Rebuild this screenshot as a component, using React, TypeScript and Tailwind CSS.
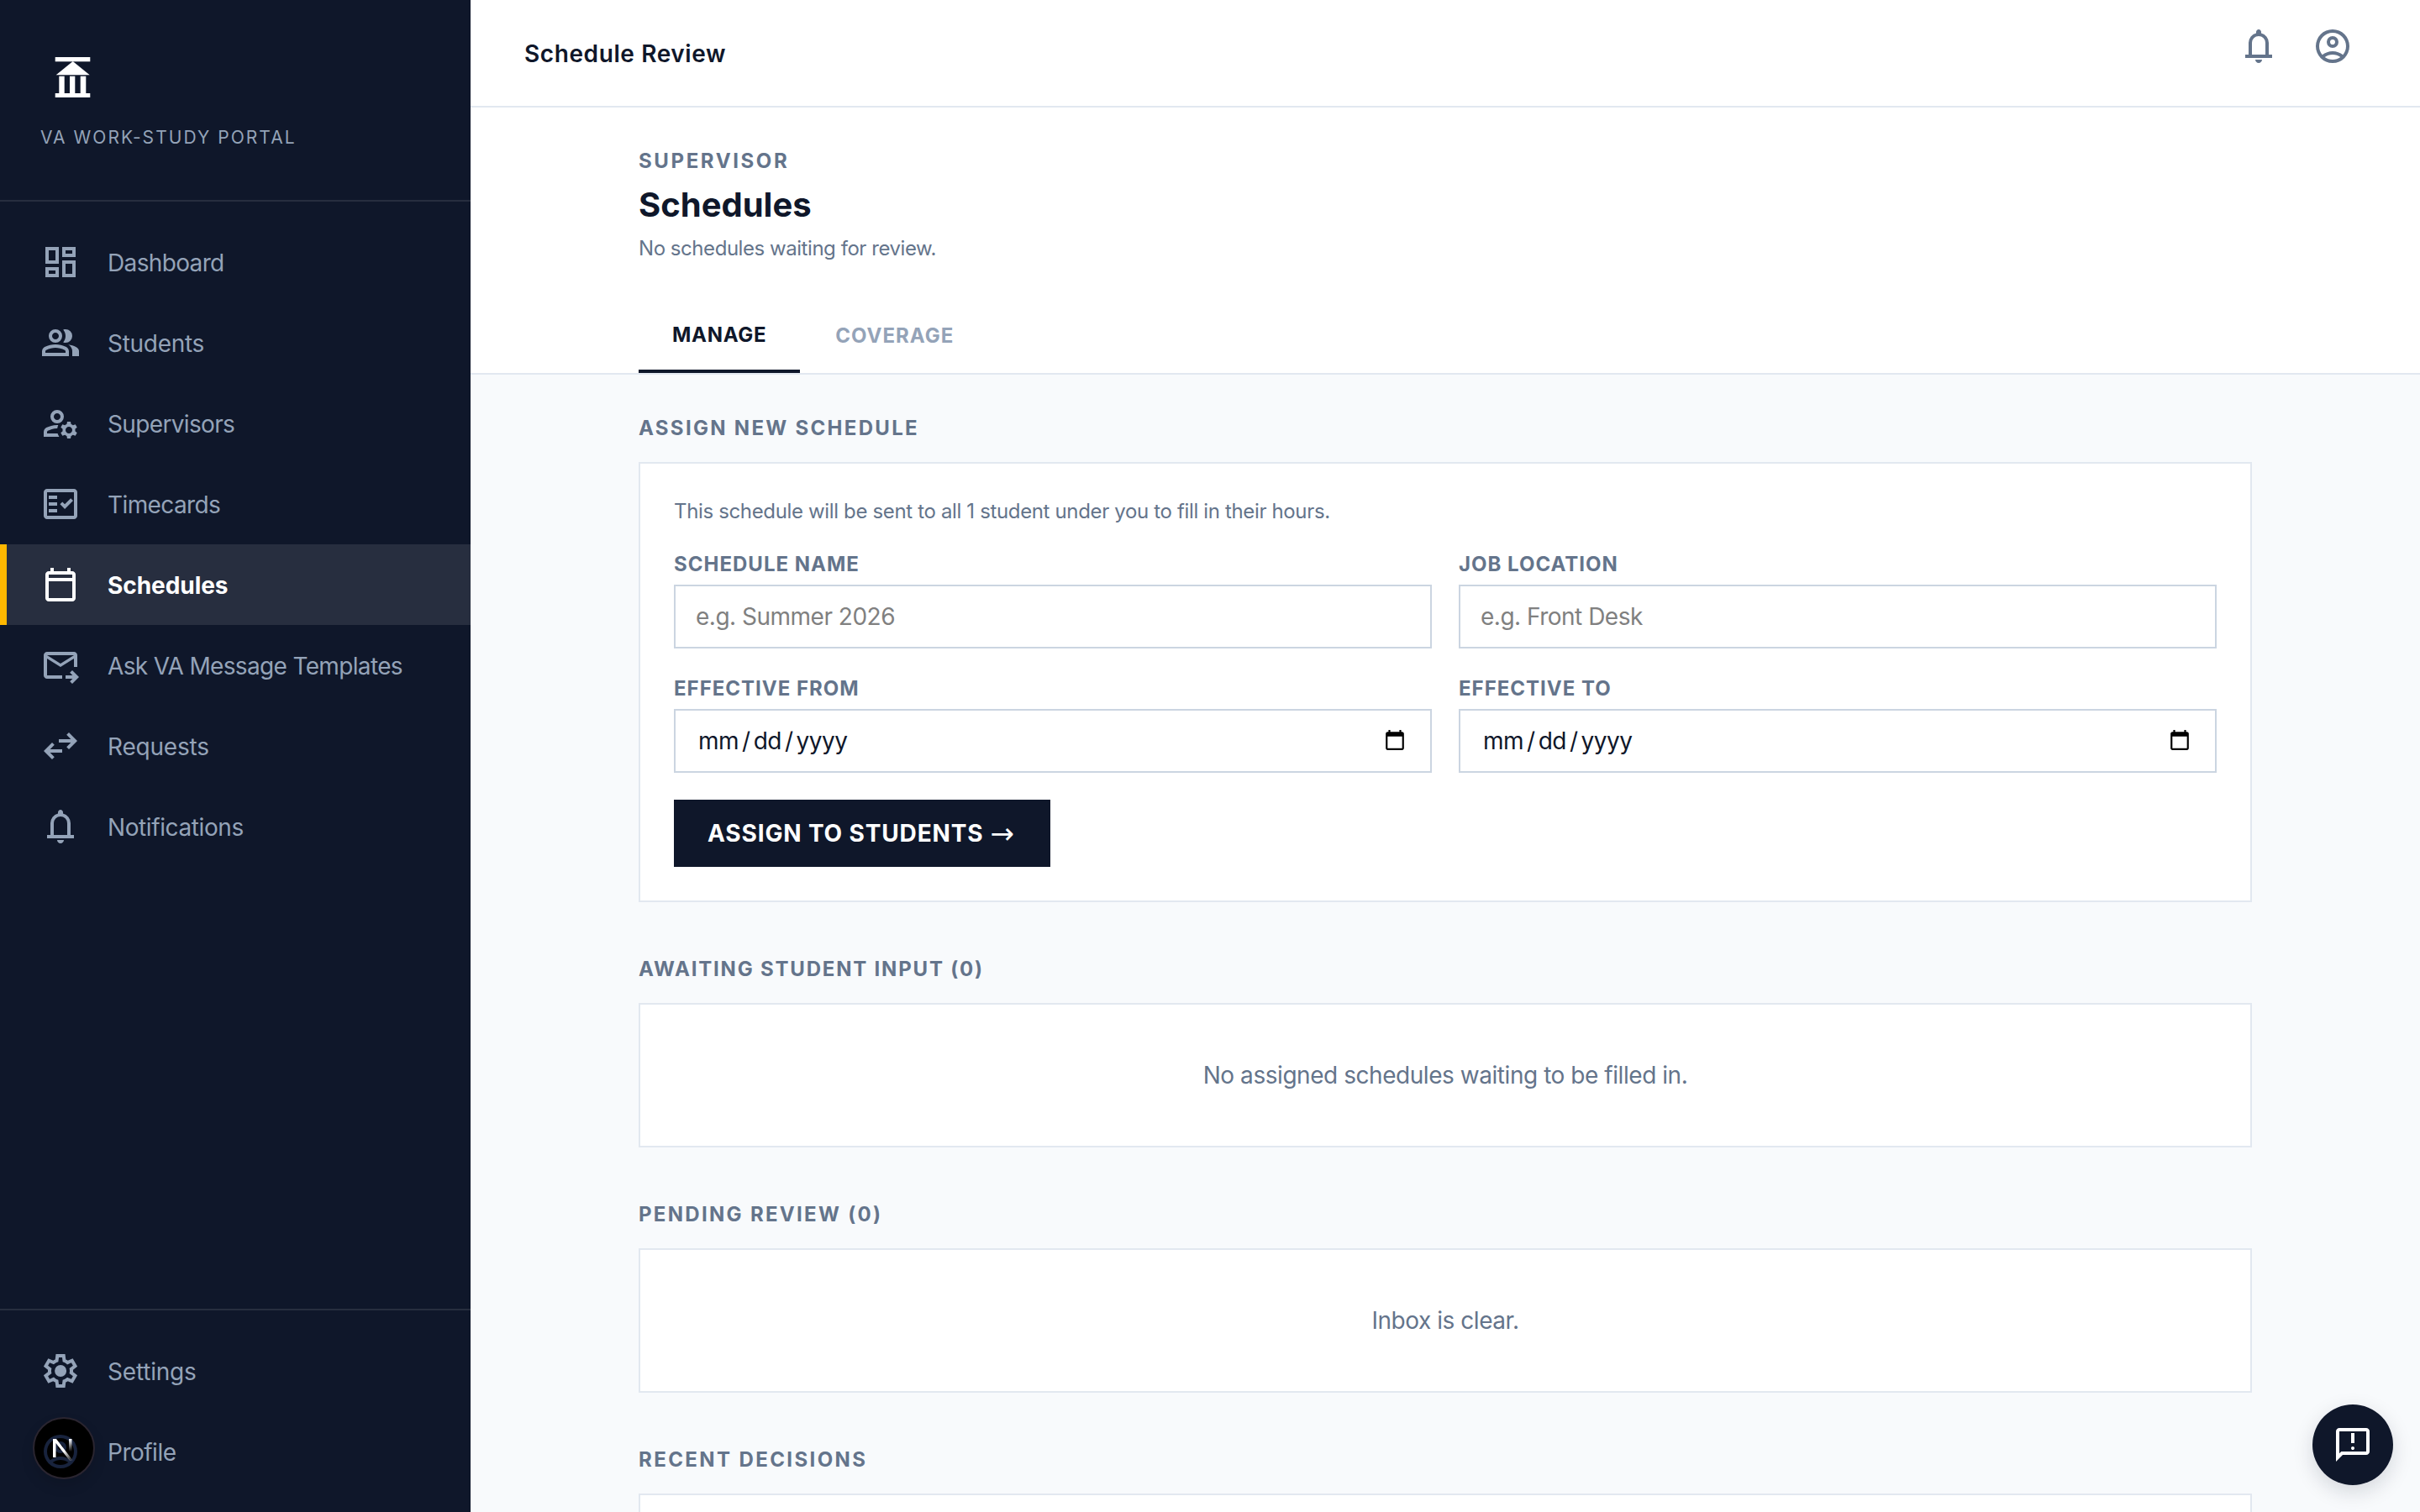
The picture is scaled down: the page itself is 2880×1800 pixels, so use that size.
import React from "react";

const P = {
  dashboard: "M520-600v-240h320v240H520ZM120-440v-400h320v400H120Zm400 320v-400h320v400H520Zm-400 0v-240h320v240H120Zm80-400h160v-240H200v240Zm400 320h160v-240H600v240Zm0-480h160v-80H600v80ZM200-200h160v-80H200v80Zm160-320Zm240-160Zm0 240ZM360-280Z",
  group: "M40-160v-112q0-34 17.5-62.5T104-378q62-31 126-46.5T360-440q66 0 130 15.5T616-378q29 15 46.5 43.5T680-272v112H40Zm720 0v-120q0-44-24.5-84.5T666-434q51 6 96 20.5t84 35.5q36 20 55 44.5t19 53.5v120H760ZM360-480q-66 0-113-47t-47-113q0-66 47-113t113-47q66 0 113 47t47 113q0 66-47 113t-113 47Zm400-160q0 66-47 113t-113 47q-11 0-28-2.5t-28-5.5q27-32 41.5-71t14.5-81q0-42-14.5-81T544-792q14-5 28-6.5t28-1.5q66 0 113 47t47 113ZM120-240h480v-32q0-11-5.5-20T580-306q-54-27-109-40.5T360-360q-56 0-111 13.5T140-306q-9 5-14.5 14t-5.5 20v32Zm240-320q33 0 56.5-23.5T440-640q0-33-23.5-56.5T360-720q-33 0-56.5 23.5T280-640q0 33 23.5 56.5T360-560Zm0 320Zm0-400Z",
  manage: "M400-480q-66 0-113-47t-47-113q0-66 47-113t113-47q66 0 113 47t47 113q0 66-47 113t-113 47ZM80-160v-112q0-33 17-62t47-44q51-26 115-44t141-18h14q6 0 12 2-8 18-13.5 37.5T404-360h-4q-71 0-127.5 18T180-306q-9 5-14.5 14t-5.5 20v32h252q6 21 16 41.5t22 38.5H80Zm560 40-12-60q-12-5-22.5-10.5T584-204l-58 18-40-68 46-40q-2-14-2-26t2-26l-46-40 40-68 58 18q11-8 21.5-13.5T628-460l12-60h80l12 60q12 5 22.5 11t21.5 15l58-20 40 70-46 40q2 12 2 25t-2 25l46 40-40 68-58-18q-11 8-21.5 13.5T732-180l-12 60h-80Zm40-120q33 0 56.5-23.5T760-320q0-33-23.5-56.5T680-400q-33 0-56.5 23.5T600-320q0 33 23.5 56.5T680-240ZM400-560q33 0 56.5-23.5T480-640q0-33-23.5-56.5T400-720q-33 0-56.5 23.5T320-640q0 33 23.5 56.5T400-560Zm0-80Zm12 400Z",
  fact: "M160-120q-33 0-56.5-23.5T80-200v-560q0-33 23.5-56.5T160-840h640q33 0 56.5 23.5T880-760v560q0 33-23.5 56.5T800-120H160Zm0-80h640v-560H160v560Zm40-80h200v-80H200v80Zm382-80 198-198-57-57-141 142-57-57-56 57 113 113Zm-382-80h200v-80H200v80Zm0-160h200v-80H200v80Zm-40 400v-560 560Z",
  calendar: "M200-80q-33 0-56.5-23.5T120-160v-560q0-33 23.5-56.5T200-800h40v-80h80v80h320v-80h80v80h40q33 0 56.5 23.5T840-720v560q0 33-23.5 56.5T760-80H200Zm0-80h560v-400H200v400Zm0-480h560v-80H200v80Zm0 0v-80 80Z",
  inbox: "M480-440 160-640v400h360v80H160q-33 0-56.5-23.5T80-240v-480q0-33 23.5-56.5T160-800h640q33 0 56.5 23.5T880-720v280h-80v-200L480-440Zm0-80 320-200H160l320 200ZM760-40l-56-56 63-64H600v-80h167l-64-64 57-56 160 160L760-40ZM160-640v440-240 3-283 80Z",
  sync: "M280-160 80-360l200-200 56 57-103 103h287v80H233l103 103-56 57Zm400-240-56-57 103-103H440v-80h287L624-743l56-57 200 200-200 200Z",
  bell: "M160-200v-80h80v-280q0-83 50-147.5T420-792v-28q0-25 17.5-42.5T480-880q25 0 42.5 17.5T540-820v28q80 20 130 84.5T720-560v280h80v80H160Zm320-300Zm0 420q-33 0-56.5-23.5T400-160h160q0 33-23.5 56.5T480-80ZM320-280h320v-280q0-66-47-113t-113-47q-66 0-113 47t-47 113v280Z",
  settings: "m370-80-16-128q-13-5-24.5-12T307-235l-119 50L78-375l103-78q-1-7-1-13.5v-27q0-6.5 1-13.5L78-585l110-190 119 50q11-8 23-15t24-12l16-128h220l16 128q13 5 24.5 12t22.5 15l119-50 110 190-103 78q1 7 1 13.5v27q0 6.5-2 13.5l103 78-110 190-118-50q-11 8-23 15t-24 12L590-80H370Zm70-80h79l14-106q31-8 57.5-23.5T639-327l99 41 39-68-86-65q5-14 7-29.5t2-31.5q0-16-2-31.5t-7-29.5l86-65-39-68-99 42q-22-23-48.5-38.5T533-694l-13-106h-79l-14 106q-31 8-57.5 23.5T321-633l-99-41-39 68 86 64q-5 15-7 30t-2 32q0 16 2 31t7 30l-86 65 39 68 99-42q22 23 48.5 38.5T427-266l13 106Zm42-180q58 0 99-41t41-99q0-58-41-99t-99-41q-59 0-99.5 41T342-480q0 58 40.5 99t99.5 41Zm-2-140Z",
  account: "M234-276q51-39 114-61.5T480-360q69 0 132 22.5T726-276q35-41 54.5-93T800-480q0-133-93.5-226.5T480-800q-133 0-226.5 93.5T160-480q0 59 19.5 111t54.5 93Zm246-164q-59 0-99.5-40.5T340-580q0-59 40.5-99.5T480-720q59 0 99.5 40.5T620-580q0 59-40.5 99.5T480-440Zm0 360q-83 0-156-31.5T197-197q-54-54-85.5-127T80-480q0-83 31.5-156T197-763q54-54 127-85.5T480-880q83 0 156 31.5T763-763q54 54 85.5 127T880-480q0 83-31.5 156T763-197q-54 54-127 85.5T480-80Zm0-80q53 0 100-15.5t86-44.5q-39-29-86-44.5T480-280q-53 0-100 15.5T294-220q39 29 86 44.5T480-160Zm0-360q26 0 43-17t17-43q0-26-17-43t-43-17q-26 0-43 17t-17 43q0 26 17 43t43 17Zm0-60Zm0 360Z",
  feedback: "M480-360q17 0 28.5-11.5T520-400q0-17-11.5-28.5T480-440q-17 0-28.5 11.5T440-400q0 17 11.5 28.5T480-360Zm-40-160h80v-240h-80v240ZM80-80v-720q0-33 23.5-56.5T160-880h640q33 0 56.5 23.5T880-800v480q0 33-23.5 56.5T800-240H240L80-80Zm126-240h594v-480H160v525l46-45Zm-46 0v-480 480Z",
};

function Sym({ d, className }: { d: string; className?: string }) {
  return (
    <svg viewBox="0 -960 960 960" fill="currentColor" className={`h-12 w-12 shrink-0 ${className ?? ""}`}>
      <path d={d} />
    </svg>
  );
}

const nav = [
  { label: "Dashboard", d: P.dashboard, track: "tracking-[-0.65px]" },
  { label: "Students", d: P.group, track: "tracking-[-0.3px]" },
  { label: "Supervisors", d: P.manage, track: "tracking-[-0.65px]" },
  { label: "Timecards", d: P.fact, track: "tracking-[-0.6px]" },
  { label: "Schedules", d: P.calendar, active: true, track: "tracking-[-0.05px]" },
  { label: "Ask VA Message Templates", d: P.inbox, track: "tracking-[-0.65px]" },
  { label: "Requests", d: P.sync, track: "tracking-[-0.2px]" },
  { label: "Notifications", d: P.bell, track: "tracking-[-0.4px]" },
];

function NavItem({ label, d, active, track }: { label: string; d: string; active?: boolean; track: string }) {
  return (
    <a className={`flex h-24 items-center gap-8 border-l-8 pl-10 text-[28px] ${track} ${active ? "border-[#ffb800] bg-white/10 font-bold text-white" : "border-transparent text-[#94a3b8]"}`}>
      <Sym d={d} />
      <span className="pt-[1px]">{label}</span>
    </a>
  );
}

function SectionLabel({ children, className }: { children: React.ReactNode; className: string }) {
  return <h2 className={`mb-6 h-8 text-[24px] font-bold leading-8 text-[#64748b] ${className}`}>{children}</h2>;
}

function Field({ label, placeholder, type }: { label: string; placeholder?: string; type?: string }) {
  return (
    <label className="flex flex-col">
      <span className="mb-2 h-8 text-[24px] font-bold leading-8 tracking-[1px] text-[#64748b]">{label}</span>
      <input
        type={type ?? "text"}
        placeholder={placeholder}
        className={`h-[76px] border-2 border-[#cbd5e1] bg-white px-6 text-[28px] text-[#0f172a] outline-none placeholder:text-[#808080] ${type === "date" ? "tracking-[-0.5px] [&::-webkit-calendar-picker-indicator]:mr-[2px] [&::-webkit-datetime-edit]:pl-[2px] [&::-webkit-datetime-edit-text]:px-[3px]" : "tracking-[-0.5px]"}`}
      />
    </label>
  );
}

function EmptyCard({ text }: { text: string }) {
  return (
    <div className="flex h-[172px] items-center justify-center border-2 border-[#e2e8f0] bg-white text-[28px] tracking-[-0.45px] text-[#64748b]">
      {text}
    </div>
  );
}

export default function App() {
  return (
    <div className="flex h-screen overflow-hidden bg-[#f8fafc] font-['Inter',sans-serif] text-[#0f172a]">
      <aside className="flex w-[560px] shrink-0 flex-col bg-[#0f172a]">
        <div className="h-[240px] border-b-2 border-white/10 pl-12 pt-[68px]">
          <svg width="44" height="50" viewBox="0 0 44 50" className="ml-[17px] text-white" fill="currentColor">
            <rect x="0.7" y="0" width="41.6" height="5.3" />
            <path d="M21.7 5 L41.7 21.3 H1.7 Z" />
            <rect x="5.3" y="22.7" width="6.4" height="20.3" />
            <rect x="18" y="22.7" width="6.3" height="20.3" />
            <rect x="30.7" y="22.7" width="6.6" height="20.3" />
            <rect x="0.7" y="43" width="41.6" height="5" />
          </svg>
          <div className="mt-[30px] text-[21px] leading-8 tracking-[2.05px] text-[#94a3b8]">VA WORK-STUDY PORTAL</div>
        </div>
        <nav className="flex-1 pt-6">
          {nav.map((n) => (
            <NavItem key={n.label} {...n} />
          ))}
        </nav>
        <div className="border-t-2 border-white/10 py-6">
          <NavItem label="Settings" d={P.settings} track="tracking-[-0.2px]" />
          <NavItem label="Profile" d={P.account} track="tracking-[-0.5px]" />
        </div>
      </aside>

      <main className="flex min-w-0 flex-1 flex-col">
        <header className="flex h-32 shrink-0 items-center justify-between border-b-2 border-[#e2e8f0] bg-white pl-16 pr-20">
          <span className="pt-[2px] text-[28px] font-semibold tracking-[0.6px]">Schedule Review</span>
          <div className="mb-4 flex items-center gap-10 text-[#64748b]">
            <Sym d={P.bell} />
            <Sym d={P.account} />
          </div>
        </header>

        <section className="h-[318px] shrink-0 border-b-2 border-[#e2e8f0] bg-white">
          <div className="mx-auto w-[1920px] pt-12">
            <div className="text-[24px] font-bold leading-8 tracking-[2.6px] text-[#64748b]">SUPERVISOR</div>
            <h1 className="mt-2 text-[40px] font-bold leading-[56px]">Schedules</h1>
            <p className="mt-[6px] text-[24px] leading-9 tracking-[-0.45px] text-[#64748b]">No schedules waiting for review.</p>
            <div className="mt-10 flex h-[90px]">
              <div className="flex h-[90px] items-center border-b-4 border-[#0f172a] px-10 pt-1 text-[24px] font-bold tracking-[0.7px]">MANAGE</div>
              <div className="flex h-[90px] items-center pl-[42px] pr-10 pt-[2px] text-[24px] font-bold tracking-[1px] text-[#94a3b8]">COVERAGE</div>
            </div>
          </div>
        </section>

        <div className="mx-auto w-[1920px] pt-12">
          <SectionLabel className="tracking-[2.3px]">ASSIGN NEW SCHEDULE</SectionLabel>
          <div className="border-2 border-[#e2e8f0] bg-white p-10">
            <p className="pt-[2px] text-[24px] leading-[30px] tracking-[-0.35px] text-[#64748b]">This schedule will be sent to all 1 student under you to fill in their hours.</p>
            <div className="mt-8 grid grid-cols-2 gap-x-8 gap-y-8">
              <Field label="SCHEDULE NAME" placeholder="e.g. Summer 2026" />
              <Field label="JOB LOCATION" placeholder="e.g. Front Desk" />
              <Field label="EFFECTIVE FROM" type="date" />
              <Field label="EFFECTIVE TO" type="date" />
            </div>
            <button className="mt-8 flex h-20 w-[448px] items-center gap-[8px] bg-[#0f172a] pl-10 text-[28px] font-bold tracking-[0.85px] text-white">
              <span>ASSIGN TO STUDENTS</span>
              <span className="font-['DejaVu_Sans',sans-serif] text-[34px] font-normal leading-none tracking-normal">→</span>
            </button>
          </div>

          <div className="mt-16">
            <SectionLabel className="tracking-[1.8px]">AWAITING STUDENT INPUT (0)</SectionLabel>
            <EmptyCard text="No assigned schedules waiting to be filled in." />
          </div>
          <div className="mt-16">
            <SectionLabel className="tracking-[2.3px]">PENDING REVIEW (0)</SectionLabel>
            <EmptyCard text="Inbox is clear." />
          </div>
          <div className="mt-16">
            <SectionLabel className="tracking-[2.4px]">RECENT DECISIONS</SectionLabel>
            <EmptyCard text="" />
          </div>
        </div>
      </main>

      <div className="fixed bottom-[39px] left-[39px] h-[74px] w-[74px] rounded-full border-2 border-[#2a2530] bg-black shadow-[0_8px_16px_rgba(0,0,0,0.12)]">
        <Sym d={P.account} className="absolute left-[7px] top-[15px] text-[#18233d]" />
        <svg width="24" height="26" viewBox="0 0 24 26" fill="none" className="absolute left-[22px] top-6">
          <defs>
            <linearGradient id="ngd" x1="0" y1="0" x2="1" y2="1">
              <stop offset="0.55" stopColor="#fff" />
              <stop offset="1" stopColor="#fff" stopOpacity="0" />
            </linearGradient>
            <linearGradient id="ngs" x1="0" y1="0" x2="0" y2="1">
              <stop offset="0" stopColor="#fff" />
              <stop offset="1" stopColor="#fff" stopOpacity="0" />
            </linearGradient>
          </defs>
          <path d="M0 0 H4 L24 26 H20 L3.5 5 V22 H0 Z" fill="url(#ngd)" />
          <rect x="19" y="0" width="3.5" height="15" fill="url(#ngs)" />
        </svg>
      </div>

      <button className="fixed bottom-8 right-8 flex h-24 w-24 items-center justify-center rounded-full bg-[#0f172a] text-white shadow-[0_8px_24px_rgba(15,23,42,0.15)]">
        <Sym d={P.feedback} />
      </button>
    </div>
  );
}
